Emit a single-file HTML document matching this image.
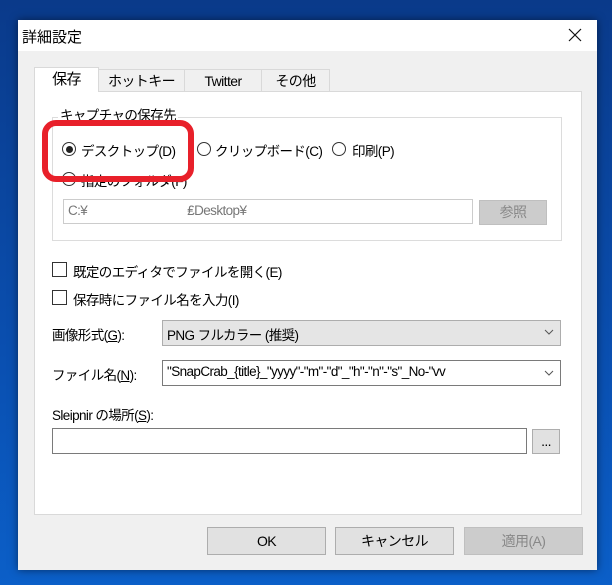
<!DOCTYPE html>
<html><head><meta charset="utf-8"><style>
*{box-sizing:border-box;margin:0;padding:0}
body{width:612px;height:585px;overflow:hidden;background:linear-gradient(180deg,#0a3a8a 0%,#0a4fb0 60%,#0b5fc8 100%);font-family:"Liberation Sans","Noto Sans CJK JP",sans-serif;font-size:13.5px;color:#000;position:relative;letter-spacing:-0.6px}
.a{position:absolute}
.win{left:18px;top:20px;width:579px;height:550px;background:#f0f0f0;box-shadow:0 0 8px rgba(0,0,0,.5)}
.title{left:18px;top:20px;width:579px;height:31px;background:#fff}
.tab{background:#f0f0f0;border:1px solid #d9d9d9;border-bottom:none;text-align:center;line-height:22px;font-size:14px}
.panel{left:34px;top:91px;width:548px;height:424px;background:#fff;border:1px solid #d9d9d9}
.radio{width:14px;height:14px;border:1px solid #333;border-radius:50%;background:#fff}
.chk{width:15px;height:15px;border:1px solid #333;background:#fff}
.btn{background:#e1e1e1;border:1px solid #adadad;text-align:center;line-height:26px;font-size:14px}
</style></head><body>
<div class="a win"></div>
<div class="a title"></div>
<div class="a" style="left:22px;top:26px;font-size:15px;letter-spacing:0">詳細設定</div>
<svg class="a" style="left:568px;top:28px" width="14" height="14"><path d="M1 1L13 13M13 1L1 13" stroke="#111" stroke-width="1.2"/></svg>
<div class="a panel"></div>
<div class="a tab" style="left:34px;top:67px;width:65px;height:25px;background:#fff;line-height:24px;font-size:15px">保存</div>
<div class="a tab" style="left:98px;top:69px;width:87px;height:22px">ホットキー</div>
<div class="a tab" style="left:184px;top:69px;width:78px;height:22px">Twitter</div>
<div class="a tab" style="left:261px;top:69px;width:69px;height:22px">その他</div>
<div class="a" style="left:52px;top:117px;width:510px;height:124px;border:1px solid #dcdcdc"></div>
<div class="a" style="left:58px;top:104px;background:#fff;padding:0 2px">キャプチャの保存先</div>
<div class="a radio" style="left:62px;top:142px"></div><div class="a" style="left:66px;top:146px;width:7px;height:7px;border-radius:50%;background:#222"></div>
<div class="a" style="left:81px;top:140px">デスクトップ(D)</div>
<div class="a radio" style="left:197px;top:142px"></div><div class="a" style="left:215px;top:140px">クリップボード(C)</div>
<div class="a radio" style="left:332px;top:142px"></div><div class="a" style="left:352px;top:140px">印刷(P)</div>
<div class="a radio" style="left:62px;top:172px"></div><div class="a" style="left:81px;top:170px">指定のフォルダ(F)</div>
<div class="a" style="left:42px;top:120px;width:152px;height:62px;border:6px solid #e8202a;border-radius:14px"></div>
<div class="a" style="left:63px;top:199px;width:410px;height:25px;border:1px solid #ccc;background:#fff;color:#777;padding:3px 4px">C:¥<span style="margin-left:100px">₤Desktop¥</span></div>
<div class="a btn" style="left:479px;top:200px;width:68px;height:25px;background:#ccc;border-color:#bfbfbf;color:#888;line-height:23px">参照</div>
<div class="a chk" style="left:52px;top:262px"></div><div class="a" style="left:73px;top:261px">既定のエディタでファイルを開く(E)</div>
<div class="a chk" style="left:52px;top:290px"></div><div class="a" style="left:73px;top:289px">保存時にファイル名を入力(I)</div>
<div class="a" style="left:52px;top:324px">画像形式(<u>G</u>):</div>
<div class="a" style="left:162px;top:320px;width:399px;height:26px;background:#e5e5e5;border:1px solid #adadad;padding:3px 4px">PNG フルカラー (推奨)</div>
<div class="a" style="left:52px;top:364px">ファイル名(<u>N</u>):</div>
<div class="a" style="left:162px;top:360px;width:399px;height:26px;background:#fff;border:1px solid #7a7a7a;padding:3px 4px">"SnapCrab_{title}_"yyyy"-"m"-"d"_"h"-"n"-"s"_No-"vv</div>
<svg class="a" style="left:544px;top:328px" width="10" height="8"><path d="M1 2L5 6L9 2" fill="none" stroke="#555"/></svg>
<svg class="a" style="left:544px;top:369px" width="10" height="8"><path d="M1 2L5 6L9 2" fill="none" stroke="#555"/></svg>
<div class="a" style="left:52px;top:404px">Sleipnir の場所(<u>S</u>):</div>
<div class="a" style="left:52px;top:428px;width:475px;height:26px;background:#fff;border:1px solid #7a7a7a"></div>
<div class="a btn" style="left:532px;top:429px;width:28px;height:25px;line-height:22px">...</div>
<div class="a btn" style="left:207px;top:527px;width:119px;height:28px">OK</div>
<div class="a btn" style="left:335px;top:527px;width:119px;height:28px">キャンセル</div>
<div class="a btn" style="left:464px;top:527px;width:119px;height:28px;background:#ccc;border-color:#bfbfbf;color:#888">適用(A)</div>
</body></html>
